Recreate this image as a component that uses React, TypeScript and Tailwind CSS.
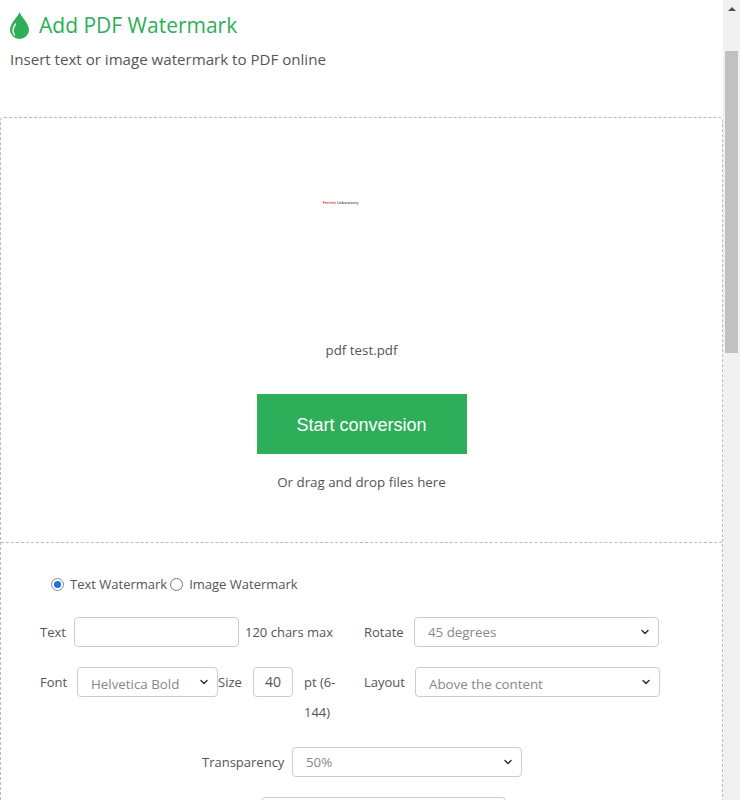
import { ChevronDown } from "lucide-react"

function Select({ value, className }: { value: string; className: string }) {
  return (
    <div className={`relative h-[30px] shrink-0 ${className}`}>
      <select
        defaultValue={value}
        className="w-full h-full appearance-none bg-white border border-[#ccc] rounded-[4px] pl-[13px] pr-6 pt-[1px] text-[13.33px] text-[#888] outline-none"
      >
        <option>{value}</option>
      </select>
      <ChevronDown className="absolute right-[8px] top-[9px] w-[12px] h-[12px] text-[#333] pointer-events-none" strokeWidth={3} />
    </div>
  )
}

function Radio({ checked, label }: { checked?: boolean; label: string }) {
  return (
    <label className="flex items-center gap-[6px]">
      <span className={`w-[13px] h-[13px] rounded-full border flex items-center justify-center bg-white ${checked ? "border-[#888]" : "border-[#767676]"}`}>
        {checked && <span className="w-[7px] h-[7px] rounded-full bg-[#1a73e8]" />}
      </span>
      {label}
    </label>
  )
}

export default function App() {
  return (
    <div className="h-[800px] overflow-hidden flex bg-white text-[14px] text-[#555]" style={{ fontFamily: '"Open Sans", sans-serif' }}>
      <div className="flex-1 min-w-0">
        {/* Header */}
        <div className="h-[117px] pl-[10px] pt-[9px]">
          <h1 className="flex items-center gap-[10px] text-[21px] leading-[32px] text-[#2dae58]">
            <svg className="w-[19px] h-[27px]" viewBox="0 0 19 27">
              <path d="M9.5 0C8 5 0 11 0 18a9.5 9 0 0 0 19 0C19 11 11 5 9.5 0Z" fill="#2dae58" />
              <path d="M5.5 12C3 15.5 2.5 20 4.5 23" fill="none" stroke="#fff" strokeWidth="1.3" strokeLinecap="round" />
            </svg>
            Add PDF Watermark
          </h1>
          <p className="text-[15.1px] leading-[22px] mt-[7px] text-[#555]">Insert text or image watermark to PDF online</p>
        </div>

        {/* Upload box */}
        <div className="border border-dashed border-[#bbb] rounded-[4px] h-[720px]">
          <div className="h-[425px] flex flex-col items-center border-b border-dashed border-[#bbb]">
            <div className="mt-[80px] mr-[42px] h-[10px] flex items-center gap-[1px] text-[4px] leading-none font-semibold">
              <span className="text-[#f01010]">Ferries</span>
              <span className="text-[#3a4a70]">Laboratory</span>
            </div>
            <p className="mt-[132px] text-[13.33px] leading-[20px]">pdf test.pdf</p>
            <button
              className="mt-[34px] w-[210px] h-[60px] pt-[3px] bg-[#2dae58] text-white text-[18px]"
              style={{ fontFamily: '"Liberation Sans", sans-serif' }}
            >
              Start conversion
            </button>
            <p className="mt-[18px] text-[13.33px] leading-[20px]">Or drag and drop files here</p>
          </div>

          {/* Options */}
          <div className="pt-[31px]">
            <div className="flex gap-[3px] pl-[50px] leading-[20px] text-[13px]">
              <Radio checked label="Text Watermark" />
              <Radio label="Image Watermark" />
            </div>

            <div className="flex items-center pl-[39px] mt-[23px] h-[30px] text-[13px]">
              <span className="w-[34px] pt-[1px]">Text</span>
              <input className="w-[165px] h-[30px] border border-[#ccc] rounded-[4px] bg-white" />
              <span className="ml-[6px] w-[119px] pt-[1px]">120 chars max</span>
              <span className="w-[50px] pt-[1px]">Rotate</span>
              <Select value="45 degrees" className="w-[245px]" />
            </div>

            <div className="flex items-start pl-[39px] mt-[20px] text-[13px] leading-[30px]">
              <span className="w-[37px]">Font</span>
              <Select value="Helvetica Bold" className="w-[141px]" />
              <span className="w-[35px]">Size</span>
              <input defaultValue="40" className="w-[40px] h-[30px] border border-[#ccc] rounded-[4px] text-center text-[14px] text-[#555] bg-white" />
              <span className="ml-[11px] w-[60px]">pt (6-<br />144)</span>
              <span className="w-[51px]">Layout</span>
              <Select value="Above the content" className="w-[245px]" />
            </div>

            <div className="flex items-center mt-[20px] pl-[201px] h-[30px] text-[13px]">
              <span className="w-[90px] pt-[1px]">Transparency</span>
              <Select value="50%" className="w-[230px]" />
            </div>

            <div className="mt-[20px] pl-[260px]">
              <Select value="" className="w-[245px]" />
            </div>
          </div>
        </div>
      </div>

      {/* Scrollbar */}
      <div className="w-[17px] shrink-0 bg-[#f1f1f1] flex flex-col items-center">
        <div className="mt-[7px] w-0 h-0 border-l-[4px] border-r-[4px] border-b-[4px] border-l-transparent border-r-transparent border-b-[#505050]" />
        <div className="mt-[40px] w-[13px] h-[302px] bg-[#c1c1c1]" />
      </div>
    </div>
  )
}
